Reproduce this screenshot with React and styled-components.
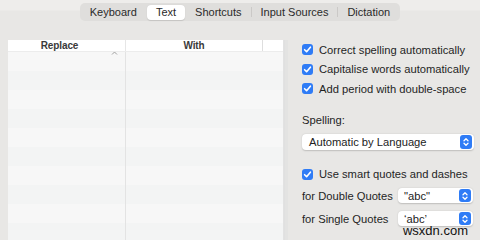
import React from "react";
import styled, { createGlobalStyle } from "styled-components";

const GlobalStyle = createGlobalStyle`
  html, body {
    margin: 0;
    padding: 0;
    background: #e8e7e5;
  }
  body {
    font-family: "Liberation Sans", Arial, sans-serif;
  }
`;

const Window = styled.div`
  position: relative;
  width: 480px;
  height: 240px;
  overflow: hidden;
  background: linear-gradient(#eeedeb 0px, #eeedeb 10px, #e8e7e5 11px);
  color: #222;
`;

const TopBar = styled.div`
  display: flex;
  justify-content: center;
  padding-top: 3px;
`;

const Segmented = styled.div`
  display: flex;
  align-items: center;
  height: 18px;
  padding: 0 1px;
  border-radius: 5px;
  background: #dfdedc;
`;

const Tab = styled.div`
  height: 15px;
  line-height: 15px;
  padding: 0 9px;
  font-size: 11px;
  color: #2a2a2a;
  border-radius: 4px;
  background: ${(p) => (p.active ? "#ffffff" : "transparent")};
  box-shadow: ${(p) => (p.active ? "0 0.5px 1px rgba(0,0,0,0.12)" : "none")};
`;

const TabDivider = styled.span`
  width: 1px;
  height: 10px;
  background: ${(p) => (p.off ? "transparent" : "#cbc9c7")};
`;

const Body = styled.div`
  display: flex;
  padding: 19px 0 0 8px;
`;

const Table = styled.div`
  width: 275px;
  height: 200px;
  background: #f6f6f6;
  box-shadow: 1px 0 0 #e2e2e2, 2px 0 0 #e0e0e0, 5px 0 0 #e3e3e2;
  display: flex;
  flex-direction: column;
`;

const HeaderRow = styled.div`
  display: flex;
  height: 23px;
  background: #ffffff;
  border-bottom: 1px solid #ececec;
  font-size: 10px;
  font-weight: bold;
  letter-spacing: -0.1px;
  color: #3a3a3a;
`;

const HeaderCell = styled.div`
  position: relative;
  width: ${(p) => p.w}px;
  display: flex;
  align-items: center;
  justify-content: center;
  padding-right: ${(p) => p.pr || 0}px;
  box-sizing: border-box;
  border-right: ${(p) => (p.line ? "1px solid #e6e6e6" : "none")};
`;

const SortMark = styled.svg`
  position: absolute;
  right: 7px;
  top: 11px;
`;

const HeaderTick = styled.span`
  width: 1px;
  height: 11px;
  background: #dedede;
`;

const Rows = styled.div`
  flex: 1;
  display: flex;
  flex-direction: column;
`;

const StripeRow = styled.div`
  display: flex;
  height: 19px;
  background: ${(p) => (p.odd ? "#f3f4f4" : "#f7f7f7")};
`;

const Cell = styled.div`
  width: ${(p) => p.w}px;
  box-sizing: border-box;
  border-right: ${(p) => (p.line ? "1px solid #e3e3e3" : "none")};
`;

const Panel = styled.div`
  display: flex;
  flex-direction: column;
  margin-left: 19px;
  width: 172px;
  font-size: 11.2px;
  color: #1f1f1f;
`;

const CheckRow = styled.label`
  display: flex;
  align-items: center;
  gap: 6px;
  height: 19.5px;
  margin-top: ${(p) => p.mt || 0}px;
  white-space: nowrap;
`;

const Box = styled.span`
  width: 11px;
  height: 11px;
  border-radius: 3px;
  background: #2f7cf6;
  display: flex;
  align-items: center;
  justify-content: center;
  flex-shrink: 0;
`;

const Label = styled.div`
  height: 16px;
  line-height: 16px;
  margin-top: ${(p) => p.mt || 0}px;
`;

const SelectRow = styled.div`
  display: flex;
  align-items: center;
  justify-content: space-between;
  height: 23px;
  padding-right: 1px;
  white-space: nowrap;
`;

const Popup = styled.div`
  display: flex;
  align-items: center;
  justify-content: space-between;
  width: ${(p) => p.w}px;
  height: ${(p) => p.h || 15}px;
  margin-top: ${(p) => p.mt || 0}px;
  padding: 0 2px 0 ${(p) => p.pl || 6}px;
  box-sizing: border-box;
  background: #ffffff;
  border-radius: 4px;
  box-shadow: 0 0.5px 1.5px rgba(0, 0, 0, 0.18);
  color: #222;
`;

const Stepper = styled.span`
  width: 12px;
  height: ${(p) => p.h || 13}px;
  border-radius: 3px;
  background: #2f7cf6;
  display: flex;
  align-items: center;
  justify-content: center;
`;

const Watermark = styled.div`
  position: absolute;
  right: 12px;
  bottom: 2px;
  font-size: 13px;
  line-height: 14px;
  color: #111;
`;

const Check = () => (
  <Box>
    <svg width="9" height="9" viewBox="0 0 9 9">
      <path
        d="M1.6 4.7 L3.6 6.7 L7.4 2.2"
        fill="none"
        stroke="#fff"
        strokeWidth="1.6"
        strokeLinecap="round"
        strokeLinejoin="round"
      />
    </svg>
  </Box>
);

const Arrows = ({ h }) => (
  <Stepper h={h}>
    <svg width="8" height="10" viewBox="0 0 8 10">
      <path
        d="M2 3.8 L4 1.8 L6 3.8 M2 6.2 L4 8.2 L6 6.2"
        fill="none"
        stroke="#fff"
        strokeWidth="1.3"
        strokeLinecap="round"
        strokeLinejoin="round"
      />
    </svg>
  </Stepper>
);

const tabs = ["Keyboard", "Text", "Shortcuts", "Input Sources", "Dictation"];
const active = 1;

export default function App() {
  const rows = Array.from({ length: 10 }, (_, i) => i);

  return (
    <Window>
      <GlobalStyle />
      <TopBar>
        <Segmented>
          {tabs.map((t, i) => (
            <React.Fragment key={t}>
              {i > 0 && <TabDivider off={i === active || i === active + 1} />}
              <Tab active={i === active}>{t}</Tab>
            </React.Fragment>
          ))}
        </Segmented>
      </TopBar>

      <Body>
        <Table>
          <HeaderRow>
            <HeaderCell w={118} pr={14} line>
              Replace
              <SortMark width="7" height="4" viewBox="0 0 7 4">
                <path d="M1 3.5 L3.5 1 L6 3.5" fill="none" stroke="#a0a0a0" strokeWidth="1" />
              </SortMark>
            </HeaderCell>
            <HeaderCell w={136}>With</HeaderCell>
            <HeaderCell w={1}>
              <HeaderTick />
            </HeaderCell>
          </HeaderRow>
          <Rows>
            {rows.map((r) => (
              <StripeRow key={r} odd={r % 2 === 1}>
                <Cell w={118} line />
                <Cell w={136} />
              </StripeRow>
            ))}
          </Rows>
        </Table>

        <Panel>
          <CheckRow>
            <Check />
            Correct spelling automatically
          </CheckRow>
          <CheckRow>
            <Check />
            Capitalise words automatically
          </CheckRow>
          <CheckRow>
            <Check />
            Add period with double-space
          </CheckRow>

          <Label mt={13}>Spelling:</Label>
          <Popup w={172} h={16} mt={6} pl={7}>
            Automatic by Language
            <Arrows h={14} />
          </Popup>

          <CheckRow mt={15}>
            <Check />
            Use smart quotes and dashes
          </CheckRow>
          <SelectRow>
            for Double Quotes
            <Popup w={75}>
              "abc"
              <Arrows />
            </Popup>
          </SelectRow>
          <SelectRow>
            for Single Quotes
            <Popup w={75}>
              ‘abc’
              <Arrows />
            </Popup>
          </SelectRow>
        </Panel>
      </Body>

      <Watermark>wsxdn.com</Watermark>
    </Window>
  );
}
